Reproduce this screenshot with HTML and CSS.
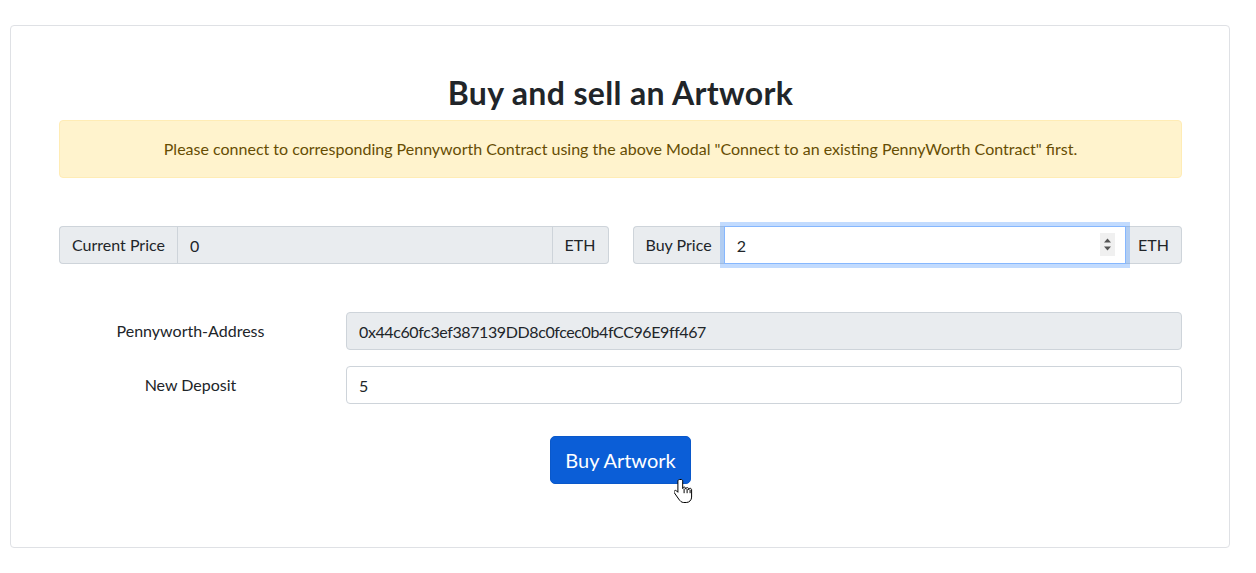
FILE: index.html
```html
<!DOCTYPE html>
<html lang="en">
<head>
<meta charset="utf-8">
<title>Buy and sell an Artwork</title>
<link rel="stylesheet" href="styles.css">
</head>
<body>
<div class="page">
  <section class="card">
    <h2 class="title">Buy and sell an Artwork</h2>
    <div class="alert">Please connect to corresponding Pennyworth Contract using the above Modal "Connect to an existing PennyWorth Contract" first.</div>

    <div class="price-row">
      <div class="input-group">
        <span class="addon">Current Price</span>
        <input class="control control-readonly" type="text" value="0" readonly>
        <span class="addon">ETH</span>
      </div>
      <div class="input-group">
        <span class="addon">Buy Price</span>
        <div class="control-wrap">
          <input class="control control-focus" type="text" value="2">
          <span class="spinner">
            <svg width="15" height="23" viewBox="0 0 15 23"><rect width="15" height="23" fill="#f0f0f0"/><path d="M7.5 5.5 L11 9.5 H4 Z" fill="#555"/><path d="M7.5 17.5 L11 13.5 H4 Z" fill="#555"/></svg>
          </span>
        </div>
        <span class="addon">ETH</span>
      </div>
    </div>

    <div class="form-grid">
      <label class="form-label" for="addr">Pennyworth-Address</label>
      <input id="addr" class="control control-readonly full address" type="text" value="0x44c60fc3ef387139DD8c0fcec0b4fCC96E9ff467" readonly>
      <label class="form-label" for="dep">New Deposit</label>
      <input id="dep" class="control full" type="text" value="5">
    </div>

    <div class="actions">
      <button class="btn-primary" type="button">Buy Artwork
        <svg class="cursor" width="20" height="26" viewBox="0 0 20 26"><path d="M5.5 1.5c-1 0-1.6.7-1.6 1.6v11.2l-1.3-1.4c-.7-.7-1.7-.7-2.2 0-.5.5-.5 1.3 0 2l4.3 6.1c1.3 1.9 2.7 3.5 5 3.5h2.600c3 0 5.3-2.4 5.3-5.4v-7.3c0-.9-.7-1.5-1.5-1.5s-1.4.6-1.4 1.5v-.7c0-.9-.7-1.5-1.5-1.5s-1.5.6-1.5 1.5v-.5c0-.9-.7-1.5-1.5-1.5s-1.5.6-1.5 1.5V3.1c0-.9-.6-1.6-1.6-1.6z" fill="#fff" stroke="#000" stroke-width="1" stroke-linejoin="round"/><path d="M10.1 10.6v4.6M13.1 11v4.2M16.1 11.8v3.4" stroke="#000" stroke-width="1" fill="none"/></svg>
      </button>
    </div>
  </section>
</div>
</body>
</html>
```

FILE: styles.css
```css
* { box-sizing: border-box; }

html, body {
  margin: 0;
  padding: 0;
  background: #fff;
}

body {
  font-family: Lato, "Open Sans", "Liberation Sans", sans-serif;
  font-size: 16px;
  line-height: 1.5;
  color: #212529;
}

.page {
  padding: 25px 26px 24px 10px;
}

.card {
  border: 1px solid #dfe1e5;
  border-radius: 4px;
  padding: 48px 47px 63px 48px;
  background: #fff;
}

.title {
  margin: 0 0 8px;
  font-size: 32px;
  line-height: 38px;
  font-weight: 700;
  letter-spacing: 0.35px;
  text-align: center;
  color: #212529;
}

.alert {
  padding: 16px;
  border: 1px solid #ffecb5;
  border-radius: 4px;
  background: #fff3cd;
  color: #664d03;
  text-align: center;
}

.price-row {
  margin-top: 48px;
  display: grid;
  grid-template-columns: 1fr 1fr;
  column-gap: 24px;
}

.input-group {
  display: flex;
  align-items: stretch;
  height: 38px;
}

.addon {
  display: flex;
  align-items: center;
  padding: 6px 12px;
  background: #e9ecef;
  border: 1px solid #ced4da;
  color: #212529;
  white-space: nowrap;
}

.input-group > .addon:first-child {
  border-radius: 4px 0 0 4px;
  border-right: 0;
}

.input-group > .addon:last-child {
  border-radius: 0 4px 4px 0;
  border-left: 0;
}

.control {
  font: inherit;
  color: #212529;
  padding: 6px 12px;
  border: 1px solid #ced4da;
  background: #fff;
  outline: none;
  min-width: 0;
  height: 38px;
}

.input-group .control {
  flex: 1 1 auto;
  border-radius: 0;
}

.control-readonly {
  background: #e9ecef;
}

.address {
  letter-spacing: -0.4px;
}

.control-wrap {
  position: relative;
  flex: 1 1 auto;
  display: flex;
  z-index: 3;
}

.control-wrap .control {
  width: 100%;
}

.control-focus {
  border-color: #86b7fe;
  box-shadow: 0 0 0 4px rgba(13, 110, 253, 0.25);
}

.spinner {
  position: absolute;
  right: 11px;
  top: 7px;
  width: 15px;
  height: 23px;
  display: block;
  line-height: 0;
}

.form-grid {
  margin-top: 48px;
  display: grid;
  grid-template-columns: 263px 1fr;
  column-gap: 24px;
  row-gap: 16px;
  align-items: center;
}

.form-label {
  text-align: center;
  color: #212529;
}

.full {
  width: 100%;
  border-radius: 4px;
}

.actions {
  margin-top: 32px;
  display: flex;
  justify-content: center;
}

.btn-primary {
  position: relative;
  font: inherit;
  font-size: 20px;
  line-height: 30px;
  padding: 8px 14px;
  border: 1px solid #0a58ca;
  border-radius: 5px;
  background: #0b5ed7;
  color: #fff;
  cursor: pointer;
}

.cursor {
  position: absolute;
  left: 123px;
  top: 41px;
}
```
